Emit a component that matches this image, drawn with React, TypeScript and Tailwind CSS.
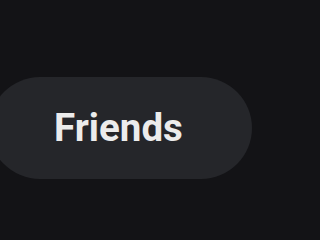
export default function App() {
  return (
    <div className="min-h-screen w-full overflow-hidden bg-[#131316]">
      <div className="flex h-[240px] w-[240px] flex-col items-center pt-[77px] font-['Roboto',sans-serif]">
        <button className="flex h-[102px] w-[263px] shrink-0 items-center justify-center rounded-full bg-[#25262a] pr-[3px] text-[38.5px] font-bold leading-none text-[#ececec]">
          Friends
        </button>
      </div>
    </div>
  );
}
